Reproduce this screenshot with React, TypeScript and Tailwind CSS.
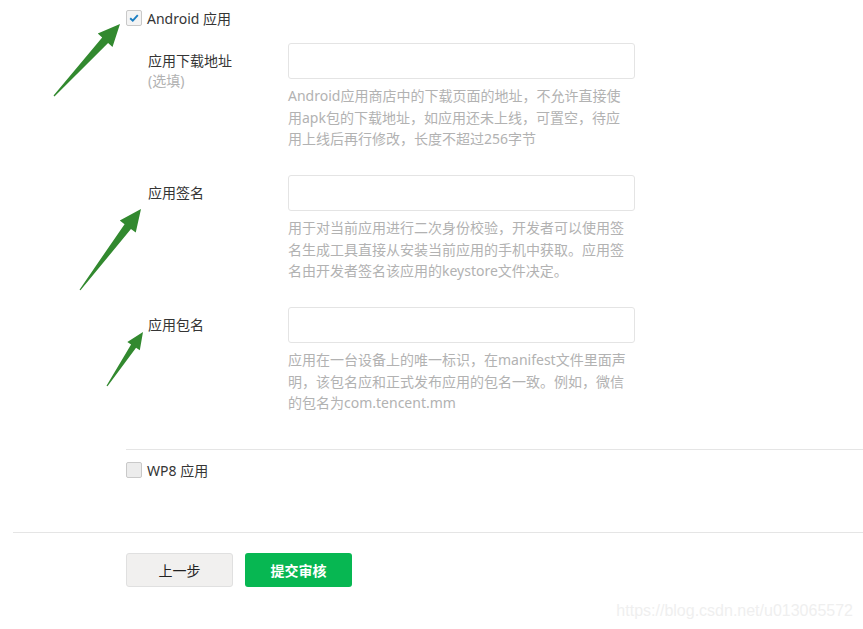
import React from "react";

type Pt = [number, number];

// green annotation arrow, tail -> tip
function arrowPoints(tail: Pt, tip: Pt, headLen: number, headHalf: number, neckHalf: number) {
  const dx = tip[0] - tail[0];
  const dy = tip[1] - tail[1];
  const len = Math.hypot(dx, dy);
  const ux = dx / len;
  const uy = dy / len;
  const nx = -uy;
  const ny = ux;
  const bx = tip[0] - ux * headLen;
  const by = tip[1] - uy * headLen;
  const pts: Pt[] = [
    [tail[0] + nx * 0.6, tail[1] + ny * 0.6],
    [bx + nx * neckHalf, by + ny * neckHalf],
    [bx + nx * headHalf, by + ny * headHalf],
    tip,
    [bx - nx * headHalf, by - ny * headHalf],
    [bx - nx * neckHalf, by - ny * neckHalf],
    [tail[0] - nx * 0.6, tail[1] - ny * 0.6],
  ];
  return pts.map((p) => p.join(",")).join(" ");
}

const Checkbox = ({ checked }: { checked?: boolean }) => (
  <span
    className={
      checked
        ? "flex h-[16px] w-[16px] items-center justify-center rounded-[2px] border border-[#c9c9c9] bg-[#f4f4f4]"
        : "flex h-[16px] w-[16px] items-center justify-center rounded-[2px] border border-[#c9c9c9] bg-[#ececec]"
    }
  >
    {checked && (
      <svg width="12" height="12" viewBox="0 0 12 12">
        <path d="M2.2 6.2 L4.8 8.7 L9.8 3.2" fill="none" stroke="#1b7ec2" strokeWidth="1.9" />
      </svg>
    )}
  </span>
);

interface FieldProps {
  label: string;
  optional?: boolean;
  lines: string[];
}

const Field: React.FC<FieldProps> = ({ label, optional, lines }) => (
  <div className="flex pl-[22px]">
    <div className="w-[140px] pt-[8px] leading-[20px]">
      <div className="text-[#353535]">{label}</div>
      {optional && <div className="text-[#b2b2b2]">(选填)</div>}
    </div>
    <div className="w-[347px]">
      <div className="h-[36px] rounded-[3px] border border-[#e4e4e4] bg-white" />
      <div className="mt-[6px] whitespace-nowrap leading-[21.5px] text-[#b2b2b2]">
        {lines.map((l, i) => (
          <div key={i}>{l}</div>
        ))}
      </div>
    </div>
  </div>
);

export default function App() {
  return (
    <div
      className="relative h-[629px] w-[863px] overflow-hidden bg-white text-[14px]"
      style={{ fontFamily: '"Noto Sans", "Noto Sans CJK SC", sans-serif' }}
    >
      <div className="pl-[13px] pt-[8px]">
        <div className="pl-[113px]">
          <label className="flex h-[20px] items-center gap-[5px] text-[#353535]">
            <Checkbox checked />
            <span>Android 应用</span>
          </label>

          <div className="mt-[15px] flex flex-col gap-[25.5px]">
            <Field
              label="应用下载地址"
              optional
              lines={[
                "Android应用商店中的下载页面的地址，不允许直接使",
                "用apk包的下载地址，如应用还未上线，可置空，待应",
                "用上线后再行修改，长度不超过256字节",
              ]}
            />
            <Field
              label="应用签名"
              lines={[
                "用于对当前应用进行二次身份校验，开发者可以使用签",
                "名生成工具直接从安装当前应用的手机中获取。应用签",
                "名由开发者签名该应用的keystore文件决定。",
              ]}
            />
            <Field
              label="应用包名"
              lines={[
                "应用在一台设备上的唯一标识，在manifest文件里面声",
                "明，该包名应和正式发布应用的包名一致。例如，微信",
                "的包名为com.tencent.mm",
              ]}
            />
          </div>

          <div className="mt-[35.5px] border-t border-[#e5e5e5] pt-[10px]">
            <label className="flex h-[20px] items-center gap-[5px] text-[#353535]">
              <Checkbox />
              <span>WP8 应用</span>
            </label>
          </div>
        </div>

        <div className="mt-[52px] border-t border-[#e5e5e5] pl-[113px] pt-[20px]">
          <div className="flex gap-[12px]">
            <button className="h-[34px] w-[107px] rounded-[3px] border border-[#e0e0e0] bg-[#f1f0ef] text-[#222]">
              上一步
            </button>
            <button className="h-[34px] w-[107px] rounded-[3px] bg-[#07b752] font-bold text-white">
              提交审核
            </button>
          </div>
        </div>
      </div>

      {/* watermark */}
      <div
        className="absolute right-[10px] top-[599px] text-[16px] text-[#efefef]"
        style={{ fontFamily: '"Liberation Sans", Arial, sans-serif' }}
      >
        https://blog.csdn.net/u013065572
      </div>

      {/* annotation arrows */}
      <svg className="pointer-events-none absolute left-0 top-0" width="863" height="629">
        <polygon points={arrowPoints([54, 96], [120, 24], 22, 10, 4)} fill="#32892f" />
        <polygon points={arrowPoints([80, 290], [141, 209], 22, 10, 4)} fill="#32892f" />
        <polygon points={arrowPoints([107, 386], [143, 332], 17, 7.5, 3)} fill="#32892f" />
      </svg>
    </div>
  );
}
